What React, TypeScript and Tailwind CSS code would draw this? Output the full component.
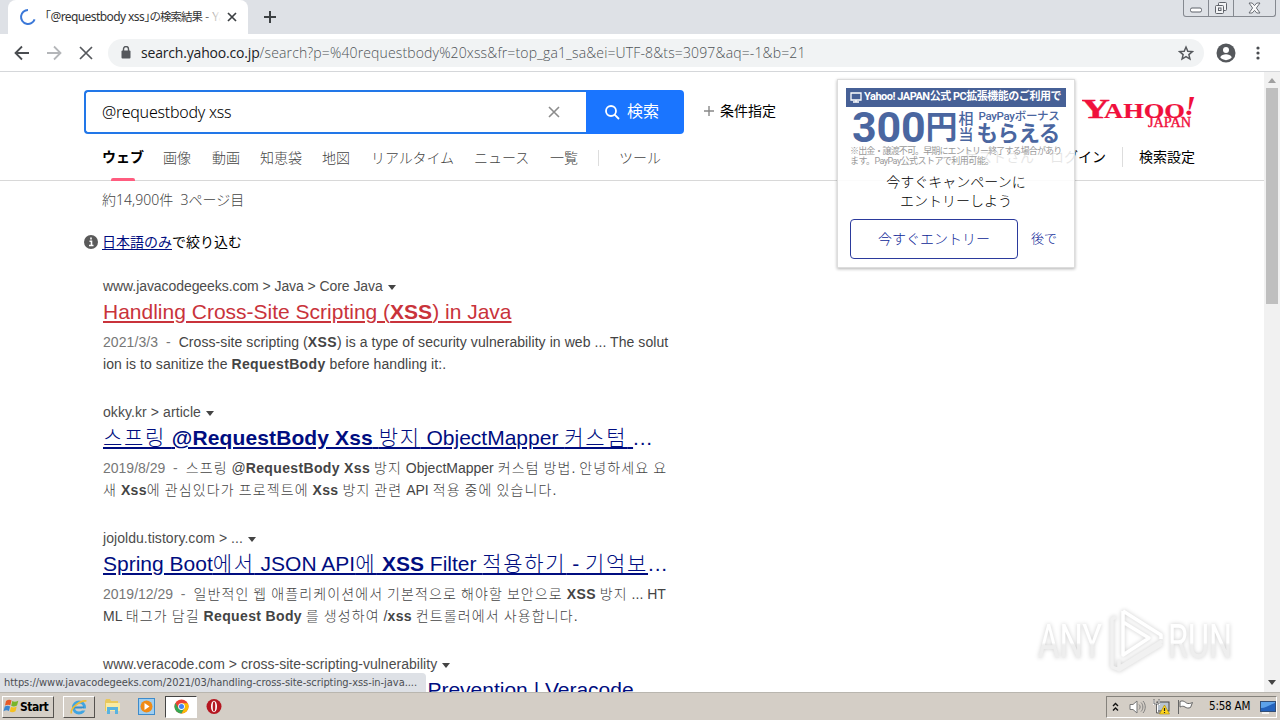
import type { ReactNode } from 'react';

const JP = "font-['Liberation_Sans','Noto_Sans_CJK_JP',sans-serif]";
const UI = "font-['DejaVu_Sans_Condensed','DejaVu_Sans','Noto_Sans_CJK_JP',sans-serif]";

function TabStrip() {
  return (
    <div className="relative flex h-[34px] shrink-0 bg-[#dee1e6] pl-2">
      <div className="flex h-[34px] w-[240px] items-center rounded-t-lg bg-white pl-[11px]">
        <svg width="18" height="18" viewBox="0 0 18 18" fill="none" className="shrink-0">
          <path d="M9 2A7 7 0 1 0 15.6 11.4" stroke="#3b78d8" strokeWidth="2" />
        </svg>
        <div className="relative ml-[8px] w-[176px] overflow-hidden whitespace-nowrap font-['Noto_Sans','Noto_Sans_CJK_JP',sans-serif] text-[12px] leading-[18px] tracking-[-0.58px] text-[#333] [font-feature-settings:'halt']">
          「@requestbody xss」<span className="text-[11.5px] tracking-[-1px]">の検索結果</span><span className="tracking-normal"> - Ya</span>
          <span className="absolute inset-y-0 right-0 w-5 bg-linear-to-r from-transparent to-white" />
        </div>
        <svg width="10" height="10" viewBox="0 0 10 10" className="ml-[6px] shrink-0">
          <path d="M1 1l8 8M9 1l-8 8" stroke="#3c4043" strokeWidth="1.7" />
        </svg>
      </div>
      <svg width="14" height="14" viewBox="0 0 14 14" className="mt-[10px] ml-[15px]">
        <path d="M7 1v12M1 7h12" stroke="#3c4043" strokeWidth="2" />
      </svg>
      <div className="ml-auto mr-1 flex h-[17px] w-[93px] rounded-b-[3px] border border-t-0 border-[#858990]">
        <div className="flex w-[25px] items-center justify-center border-r border-[#858990]">
          <svg width="12" height="6" viewBox="0 0 12 6" className="mt-1"><rect x=".5" y="1" width="11" height="4" rx="1.5" fill="#fff" stroke="#5f636a" /></svg>
        </div>
        <div className="flex w-[25px] items-center justify-center border-r border-[#858990]">
          <svg width="14" height="14" viewBox="0 0 14 14" fill="#f2f3f5" stroke="#5f636a">
            <rect x="4.5" y="1.5" width="8" height="8" rx="1" /><rect x="1.5" y="4.5" width="8" height="8" rx="1" /><rect x="4.5" y="7" width="2.5" height="2.5" />
          </svg>
        </div>
        <div className="flex flex-1 items-center justify-center">
          <svg width="13" height="12" viewBox="0 0 13 12" fill="#f8f8f9" stroke="#5f636a" strokeWidth=".9">
            <path d="M1 1h3.2l2.3 2.6L8.8 1H12L8.4 6 12 11H8.8L6.5 8.4 4.2 11H1L4.6 6z" />
          </svg>
        </div>
      </div>
    </div>
  );
}

function Toolbar() {
  return (
    <div className="flex h-[38px] shrink-0 items-center border-b border-[#d5d7da] bg-white">
      <svg width="16" height="16" viewBox="0 0 16 16" fill="none" className="ml-[14px]" stroke="#4a4d51" strokeWidth="1.8"><path d="M15 8H2M8 1.5L1.5 8 8 14.5" /></svg>
      <svg width="16" height="16" viewBox="0 0 16 16" fill="none" className="ml-4" stroke="#b4b6b9" strokeWidth="1.8"><path d="M1 8h13M8 1.5L14.5 8 8 14.5" /></svg>
      <svg width="14" height="14" viewBox="0 0 14 14" className="ml-[17px]" stroke="#55585c" strokeWidth="1.7"><path d="M1 1l12 12M13 1L1 13" /></svg>
      <div className="ml-[15px] flex h-7 w-[1096px] items-center rounded-full bg-[#f1f3f4] pl-[13px] pr-[10px]">
        <svg width="10" height="13" viewBox="0 0 10 13" fill="none"><rect x="0.5" y="4.5" width="9" height="8" rx="1" fill="#55585c" /><path d="M2.5 5V3a2.5 2.5 0 0 1 5 0v2" stroke="#55585c" strokeWidth="1.4" /></svg>
        <div className="ml-[10px] whitespace-nowrap font-['Open_Sans','Noto_Sans',sans-serif] text-[14px] font-light leading-5 tracking-[0.14px] text-[#4f5357]">
          <span className="font-normal tracking-[-0.18px] text-[#202124]">search.yahoo.co.jp</span>
          /search?p=%40requestbody%20xss&amp;fr=top_ga1_sa&amp;ei=UTF-8&amp;ts=3097&amp;aq=-1&amp;b=21
        </div>
        <svg width="16" height="16" viewBox="0 0 24 24" fill="none" className="ml-auto" stroke="#55585c" strokeWidth="2.2"><path d="M12 3l2.7 6.3 6.8.6-5.2 4.5 1.6 6.7L12 17.5l-5.9 3.6 1.6-6.7L2.5 9.9l6.8-.6z" /></svg>
      </div>
      <svg width="20" height="20" viewBox="0 0 20 20" className="ml-3"><circle cx="10" cy="10" r="9.5" fill="#55585c" /><circle cx="10" cy="7" r="3" fill="#fff" /><path d="M4.2 14.2c1-2 3.5-2.9 5.8-2.9s4.8.9 5.8 2.9a7.2 7.2 0 0 1-11.6 0z" fill="#fff" /></svg>
      <svg width="4" height="14" viewBox="0 0 4 14" fill="#4a4d51" className="ml-5"><circle cx="2" cy="2" r="1.6" /><circle cx="2" cy="7" r="1.6" /><circle cx="2" cy="12" r="1.6" /></svg>
    </div>
  );
}

function SearchHeader() {
  return (
    <header className="h-[109px] shrink-0 border-b border-[#d8d8d8]">
      <div className="flex h-[62px] pl-[84px] pt-[18px]">
        <div className="flex h-11 w-[502px] items-center rounded-l-[4px] border-2 border-r-0 border-[#2277e8] pl-4 font-['Noto_Sans',sans-serif] text-[16px] tracking-[-0.25px] text-black">
          <span className="font-light">@requestbody xss</span>
          <svg width="12" height="12" viewBox="0 0 12 12" className="ml-auto mr-[26px]" stroke="#8c8c8c" strokeWidth="1.6"><path d="M1 1l10 10M11 1L1 11" /></svg>
        </div>
        <div className="flex h-11 w-[98px] items-center rounded-r-[4px] bg-[#1a75ff] pl-[18px] text-white">
          <svg width="16" height="16" viewBox="0 0 16 16" fill="none" stroke="#fff" strokeWidth="1.8"><circle cx="7" cy="7" r="5" /><path d="M10.6 10.6L15 15" /></svg>
          <span className="ml-[7px] text-[16px] leading-6">検索</span>
        </div>
        <div className="ml-5 flex h-[42px] items-center text-[14px] text-black">
          <svg width="10" height="10" viewBox="0 0 10 10" stroke="#888" strokeWidth="1.4"><path d="M5 0v10M0 5h10" /></svg>
          <span className="ml-[6px]">条件指定</span>
        </div>
        <svg width="118" height="40" viewBox="0 -3 118 40" className="ml-[306px] mt-[2px] font-['Liberation_Serif',serif] font-bold" fill="#f0103c" stroke="#f0103c">
          <text x="-1" y="22.5" fontSize="28" strokeWidth=".3" textLength="29" lengthAdjust="spacingAndGlyphs">Y</text>
          <text x="22" y="22.5" fontSize="20" strokeWidth=".2" textLength="81" lengthAdjust="spacingAndGlyphs">AHOO</text>
          <text x="102" y="19.5" fontSize="27" fontStyle="italic" strokeWidth="0" textLength="12" lengthAdjust="spacingAndGlyphs">!</text>
          <text x="66" y="31.5" fontSize="14" fontWeight="400" strokeWidth=".4" textLength="43" lengthAdjust="spacingAndGlyphs">JAPAN</text>
        </svg>
      </div>
      <div className="flex h-[46px] pl-[102px] pt-[14px] text-[14px] font-light leading-5 text-[#444]">
        <div className="relative -mt-px w-[61px] font-bold text-black">ウェブ<span className="absolute left-[9px] top-[31px] h-[3px] w-6 rounded-t-[2px] bg-[#ff5c7f]" /></div>
        <span className="w-[49px]">画像</span>
        <span className="w-12">動画</span>
        <span className="w-[62px]">知恵袋</span>
        <span className="w-[49px]">地図</span>
        <span className="w-[103px] tracking-[-0.1px]">リアルタイム</span>
        <span className="w-[76px]">ニュース</span>
        <span className="w-[48px]">一覧</span>
        <span className="mt-[2px] h-4 w-[21px] border-l border-[#ddd]" />
        <span className="w-[345px]">ツール</span>
        <span className="-mt-px w-[86px] whitespace-nowrap font-normal text-black">ゲストさん</span>
        <span className="-mt-px w-[72px] whitespace-nowrap font-normal text-black">ログイン</span>
        <span className="-mt-px h-5 w-[17px] border-l border-[#ddd]" />
        <span className="-mt-px font-normal text-black">検索設定</span>
      </div>
    </header>
  );
}

function Mixed({ text }: { text: string }) {
  return (
    <>
      {text.split(/([가-힣]+)/).map((part, i) => (i % 2 ? <span key={i} className="font-light tracking-[0.08em]">{part}</span> : part))}
    </>
  );
}

const Hit = ({ children }: { children: ReactNode }) => <b className="tracking-[0.35px]">{children}</b>;

function Result({ site, title, children, visited = false, siteTrack, ellipsis }: { site: string; title: ReactNode; children?: ReactNode; visited?: boolean; siteTrack: string; ellipsis?: boolean }) {
  return (
    <article className="h-[126px] shrink-0 pl-[103px] font-['Liberation_Sans','Noto_Sans_CJK_KR',sans-serif]">
      <div className={`flex h-[22px] items-center whitespace-nowrap text-[14px] text-[#4c4c4c] ${siteTrack}`}>
        {site}
        <svg width="8" height="5" viewBox="0 0 8 5" fill="#444" className="ml-[5px] mt-[3px]"><path d="M0 0h8L4 5z" /></svg>
      </div>
      <h3 className={`h-[30px] whitespace-nowrap text-[21px] leading-[30px] ${visited ? 'text-[#c9333b]' : 'text-[#000d80]'}`}>
        <span className="underline decoration-[1.5px] underline-offset-[2px]">{title}</span>{ellipsis && <span className="tracking-[0.8px]">...</span>}
      </h3>
      <div className="pt-[4px] text-[14px] leading-[22px] text-[#444]">{children}</div>
    </article>
  );
}

const Line = ({ children, track = 'tracking-normal' }: { children: ReactNode; track?: string }) => (
  <p className={`h-[22px] whitespace-nowrap ${track}`}>{children}</p>
);
const Stamp = ({ children }: { children: ReactNode }) => <span className="mr-1 text-[#777]">{children}&nbsp; - </span>;

function Promo() {
  return (
    <aside className="absolute left-[837px] top-[79px] flex h-[189px] w-[238px] flex-col items-center border border-[#ddd] bg-white/90 pt-2 shadow-[0_1px_3px_rgba(0,0,0,.3)]">
      <div className="flex h-[19px] w-[220px] items-center whitespace-nowrap bg-[#466096] pl-1 font-['Roboto','Noto_Sans_CJK_JP',sans-serif] text-[11px] font-bold tracking-[-0.48px] text-white">
        <svg width="12" height="11" viewBox="0 0 12 11" fill="none" stroke="#fff" strokeWidth="1.3" className="mr-[2px] shrink-0"><path d="M1 1h10v7H1zM3 10h6M6 8v2" /></svg>
        Yahoo! JAPAN公式 PC拡張機能のご利用で
      </div>
      <div className="flex h-[39px] w-[208px] items-center whitespace-nowrap font-['Roboto','Noto_Sans_CJK_JP',sans-serif] font-bold text-[#4a66a0]">
        <span className="text-[43px] leading-[36px] tracking-[-0.2px]">300</span>
        <span className="text-[32px] leading-[36px]">円</span>
        <span className="ml-px w-[16px] shrink-0 whitespace-normal text-[15px] font-medium leading-[16px]">相当</span>
        <span className="ml-[2px] flex flex-col pt-px">
          <span className="pl-[2px] text-[11.5px] font-medium leading-[13px] tracking-[-0.3px]">PayPayボーナス</span>
          <span className="text-[21.5px] leading-[22px] tracking-[-0.5px]">もらえる</span>
        </span>
      </div>
      <p className="h-[20px] w-[212px] whitespace-nowrap font-['Roboto','Noto_Sans_CJK_JP',sans-serif] text-[9px] leading-[10px] text-[#999]">
        <span className="tracking-[-0.87px]">※出金・譲渡不可。早期にエントリー終了する場合があり</span><br /><span className="tracking-[-0.55px]">ます。PayPay公式ストアで利用可能。</span>
      </p>
      <p className="mt-[7px] text-center text-[14px] font-light leading-[19px] text-black">今すぐキャンペーンに<br />エントリーしよう</p>
      <div className="mt-[8px] flex w-full items-center pl-3 text-[14px] font-light text-[#0d1e96]">
        <button className="h-10 w-[168px] rounded-[4px] border border-[#2b3a9c]">今すぐエントリー</button>
        <span className="ml-[13px] text-[13px]">後で</span>
      </div>
    </aside>
  );
}

function Watermark() {
  return (
    <svg width="202" height="72" viewBox="0 0 202 72" className="absolute left-[1034px] top-[605px] drop-shadow-[0_0_2px_rgba(0,0,0,.2)]" fill="none">
      <defs><linearGradient id="wm" x1="0" y1="0" x2="0" y2="1"><stop offset=".52" stopColor="#fff" /><stop offset=".56" stopColor="#eee" /></linearGradient></defs>
      <g className="font-['Roboto',sans-serif]" fontSize="49" fill="url(#wm)">
        <text x="4" y="53" textLength="64" lengthAdjust="spacingAndGlyphs">ANY</text>
        <text x="134" y="53" textLength="64" lengthAdjust="spacingAndGlyphs">RUN</text>
      </g>
      <g strokeWidth="3.5" strokeLinejoin="round">
        <path d="M82 12l-4 2v48l5 2 45-28M85 55v10l43-26" stroke="#f1f1f1" />
        <path d="M89 6l38 24v4M89 6v44l26-17-26-16" stroke="#fff" />
      </g>
    </svg>
  );
}

function ChromeIcon() {
  return (
    <svg width="15" height="15" viewBox="0 0 16 16"><circle cx="8" cy="8" r="7.5" fill="#ea4335" /><path d="M1.5 4.3A7.5 7.5 0 0 0 8 15.5l3.3-5.6H4.7z" fill="#34a853" /><path d="M8 15.5A7.5 7.5 0 0 0 14.6 4.4H8l3.3 5.5z" fill="#fbbc05" /><circle cx="8" cy="8" r="3.6" fill="#fff" /><circle cx="8" cy="8" r="2.7" fill="#4285f4" /></svg>
  );
}

function Taskbar() {
  return (
    <footer className={`flex h-[28px] shrink-0 items-center border-t border-[#b9b6af] bg-[#d4cec6] ${UI}`}>
      <div className="ml-[2px] flex h-[22px] w-[52px] items-center border border-b-[#55524e] border-r-[#55524e] border-l-white border-t-white text-[12px] font-bold tracking-[-0.5px] text-black">
        <svg width="17" height="15" viewBox="0 0 17 15" className="shrink-0"><path d="M3 2c2-1.5 4-1.5 5.5-.5L7.3 6.3C5.8 5.3 4 5.5 2 6.5z" fill="#e65a28" /><path d="M9.3 2c1.5 1 3.5 1 6-.3L14 6.5c-2.3 1.2-4.3 1.2-5.8.2z" fill="#78b52c" /><path d="M1.8 7.5c2-1.2 3.7-1.1 5.3-.1L5.9 12C4.3 11 2.5 11 .5 12.2z" fill="#3a86d1" /><path d="M8 7.7c1.5 1 3.5.9 5.7-.2l-1.2 4.8c-2.3 1.2-4.2 1.2-5.7.1z" fill="#f5c021" /></svg>
        Start
      </div>
      <div className="ml-[9px] flex h-[22px] w-8 items-center justify-center border border-b-[#55524e] border-r-[#55524e] border-l-white border-t-white">
        <svg width="18" height="18" viewBox="0 0 18 18" fill="none"><circle cx="9" cy="9.5" r="5.5" stroke="#40a5e2" strokeWidth="3" /><path d="M4 9.5h10" stroke="#348fcd" strokeWidth="2" /><path d="M12 11.5h5" stroke="#d4cec6" strokeWidth="2" /><path d="M1.5 15.5C-.5 11 10 2 16.5 3" stroke="#f0bd35" strokeWidth="1.6" /></svg>
      </div>
      <svg width="17" height="17" viewBox="0 0 17 17" className="ml-[9px]"><path d="M1 3l1-2h4l1 2h7v10H1z" fill="#e9c85c" /><path d="M2 5h14v8H2z" fill="#f9eaa2" /><path d="M3 16V9h11v7h-3v-4H6v4z" fill="#59b3df" /></svg>
      <div className="ml-[17px] flex h-[17px] w-[17px] items-center justify-center border border-[#3d8bcb] bg-[#9fcef0]"><svg width="13" height="13" viewBox="0 0 13 13"><circle cx="6.5" cy="6.5" r="6" fill="#f08b16" /><path d="M4.5 3v7l5-3.5z" fill="#fff" /></svg></div>
      <div className="ml-[10px] flex h-[22px] w-[32px] items-center justify-center border border-b-white border-l-[#444] border-r-white border-t-[#444] bg-white"><ChromeIcon /></div>
      <svg width="16" height="17" viewBox="0 0 16 17" className="ml-[9px]"><circle cx="8" cy="8.5" r="7.5" fill="#b51620" /><ellipse cx="8" cy="8.5" rx="3" ry="5.8" fill="#fff" /><ellipse cx="8" cy="8.5" rx="1.3" ry="5" fill="#b51620" /></svg>
      <div className="ml-auto mr-[3px] flex h-[22px] w-[171px] items-center border border-b-white border-l-[#85827c] border-r-white border-t-[#85827c] pl-[5px] text-[11.5px] text-black">
        <svg width="7" height="10" viewBox="0 0 7 10" fill="none" stroke="#111" strokeWidth="1.4"><path d="M1 4l2.5-2.5L6 4M1 8.5L3.5 6 6 8.5" /></svg>
        <svg width="17" height="16" viewBox="0 0 17 16" fill="#fff" stroke="#777" className="ml-[10px]"><path d="M1 5.5h3L8 2v12l-4-3.5H1z" /><path d="M10 5.5c1.5 1.5 1.5 3.5 0 5M12 3.5c2.5 2.5 2.5 6.5 0 9M14 2c3 3.5 3 8.5 0 12" fill="none" strokeWidth=".9" /></svg>
        <svg width="17" height="16" viewBox="0 0 17 16" className="ml-[7px]"><rect x="4" y="3" width="12" height="9" fill="#b9c4cf" stroke="#444" /><path d="M1 1v4h3v8M6 1v4H4" stroke="#fff" strokeWidth="2" fill="none" /><path d="M1 0v5h5V0M3.5 5v9H8" stroke="#555" fill="none" strokeWidth=".9" /><path d="M11.5 6l5 9h-10z" fill="#ffd51e" stroke="#a98900" strokeWidth=".6" /><path d="M11.5 9v3M11.5 13v1" stroke="#222" strokeWidth="1.2" /></svg>
        <svg width="17" height="16" viewBox="0 0 17 16" fill="#fff" stroke="#666" className="ml-[7px]"><path d="M1.5 1v14M3 2.5c3-1.5 5 .5 6.5 1.5s4 .5 6-.5l-2 5c-2 1-4 .5-5.5-.5s-3-1-5 0z" /></svg>
        <span className="ml-[15px] whitespace-nowrap tracking-[-0.2px]">5:58 AM</span>
        <svg width="16" height="14" viewBox="0 0 16 14" className="ml-auto shrink-0"><rect x=".5" y="1.5" width="15" height="10" fill="#2362bc" stroke="#324e75" /><path d="M1 8c5 0 8-3 14-5V2H1z" fill="#5ca2ea" /><path d="M2 13h7" stroke="#fff" strokeWidth="1.5" /></svg>
      </div>
    </footer>
  );
}

export default function App() {
  return (
    <div className={`relative flex h-[720px] w-[1280px] flex-col overflow-hidden bg-white ${JP}`}>
      <TabStrip />
      <Toolbar />
      <div className="flex min-h-0 flex-1">
        <main className="flex w-[1264px] flex-col overflow-hidden">
          <SearchHeader />
          <div className="flex h-[39px] shrink-0 items-center pb-[2px] pl-[102px] font-['Noto_Sans','Noto_Sans_CJK_JP',sans-serif] text-[14px] font-light text-[#444]">約14,900件&nbsp; 3ページ目</div>
          <div className="flex h-[55px] shrink-0 items-start pl-[84px] pt-[11px] text-[14px] leading-[22px]">
            <svg width="14" height="14" viewBox="0 0 14 14" className="mt-1"><circle cx="7" cy="7" r="7" fill="#5a5a5a" /><path d="M7 2.5v2M5.5 6.2H7.5V10M5 10.5h4.5" stroke="#fff" strokeWidth="1.6" fill="none" /></svg>
            <span className="ml-1 text-[#000d80] underline underline-offset-2">日本語のみ</span>で絞り込む
          </div>
          <Result visited site="www.javacodegeeks.com > Java > Core Java" siteTrack="tracking-[-0.07px]" title={<>Handling Cross-Site Scripting (<b>XSS</b>) in Java</>}>
            <Line track="tracking-[0.07px]"><Stamp>2021/3/3</Stamp>Cross-site scripting (<Hit>XSS</Hit>) is a type of security vulnerability in web ... The solut</Line>
            <Line track="tracking-[0.07px]">ion is to sanitize the <Hit>RequestBody</Hit> before handling it:.</Line>
          </Result>
          <Result ellipsis site="okky.kr > article" siteTrack="tracking-[0.08px]" title={<><Mixed text="스프링 " /><b className="tracking-[0.12px]">@RequestBody Xss</b><Mixed text=" 방지 ObjectMapper 커스텀 " /></>}>
            <Line><Stamp>2019/8/29</Stamp><Mixed text="스프링 @" /><Hit>RequestBody Xss</Hit><Mixed text=" 방지 ObjectMapper 커스텀 방법. 안녕하세요 요" /></Line>
            <Line><Mixed text="새 " /><Hit>Xss</Hit><Mixed text="에 관심있다가 프로젝트에 " /><Hit>Xss</Hit><Mixed text=" 방지 관련 API 적용 중에 있습니다." /></Line>
          </Result>
          <Result ellipsis site="jojoldu.tistory.com > ..." siteTrack="tracking-[0.05px]" title={<><Mixed text="Spring Boot에서 JSON API에 " /><b>XSS</b><Mixed text=" Filter 적용하기 - 기억보" /></>}>
            <Line><Stamp>2019/12/29</Stamp><Mixed text="일반적인 웹 애플리케이션에서 기본적으로 해야할 보안으로 " /><Hit>XSS</Hit><Mixed text=" 방지 ... HT" /></Line>
            <Line><Mixed text="ML 태그가 담길 " /><Hit>Request Body</Hit><Mixed text=" 를 생성하여 /" /><Hit>xss</Hit><Mixed text=" 컨트롤러에서 사용합니다." /></Line>
          </Result>
          <Result site="www.veracode.com > cross-site-scripting-vulnerability" siteTrack="tracking-[0.03px]" title={<><span className="tracking-[-0.07px]">Cross-Site Scripting (<b>XSS</b>) Attacks</span> Prevention | Veracode</>} />
        </main>
        <div className="flex w-4 flex-col items-center bg-[#f1f1f1]">
          <svg width="8" height="5" viewBox="0 0 8 5" fill="#a0a0a0" className="mt-[6px]"><path d="M0 5h8L4 0z" /></svg>
          <div className="mt-[5px] h-[216px] w-3 bg-[#bfbfbf]" />
          <svg width="8" height="5" viewBox="0 0 8 5" fill="#444" className="mb-[7px] mt-auto"><path d="M0 0h8L4 5z" /></svg>
        </div>
      </div>
      <Taskbar />
      <Promo />
      <Watermark />
      <div className={`absolute left-0 top-[673px] flex h-[19px] w-[426px] items-center whitespace-nowrap rounded-tr-[4px] bg-[#dee1e6] pl-1 pt-[2px] text-[11px] tracking-[-0.05px] text-[#4b4e52] ${UI}`}>https://www.javacodegeeks.com/2021/03/handling-cross-site-scripting-xss-in-java....</div>
    </div>
  );
}
